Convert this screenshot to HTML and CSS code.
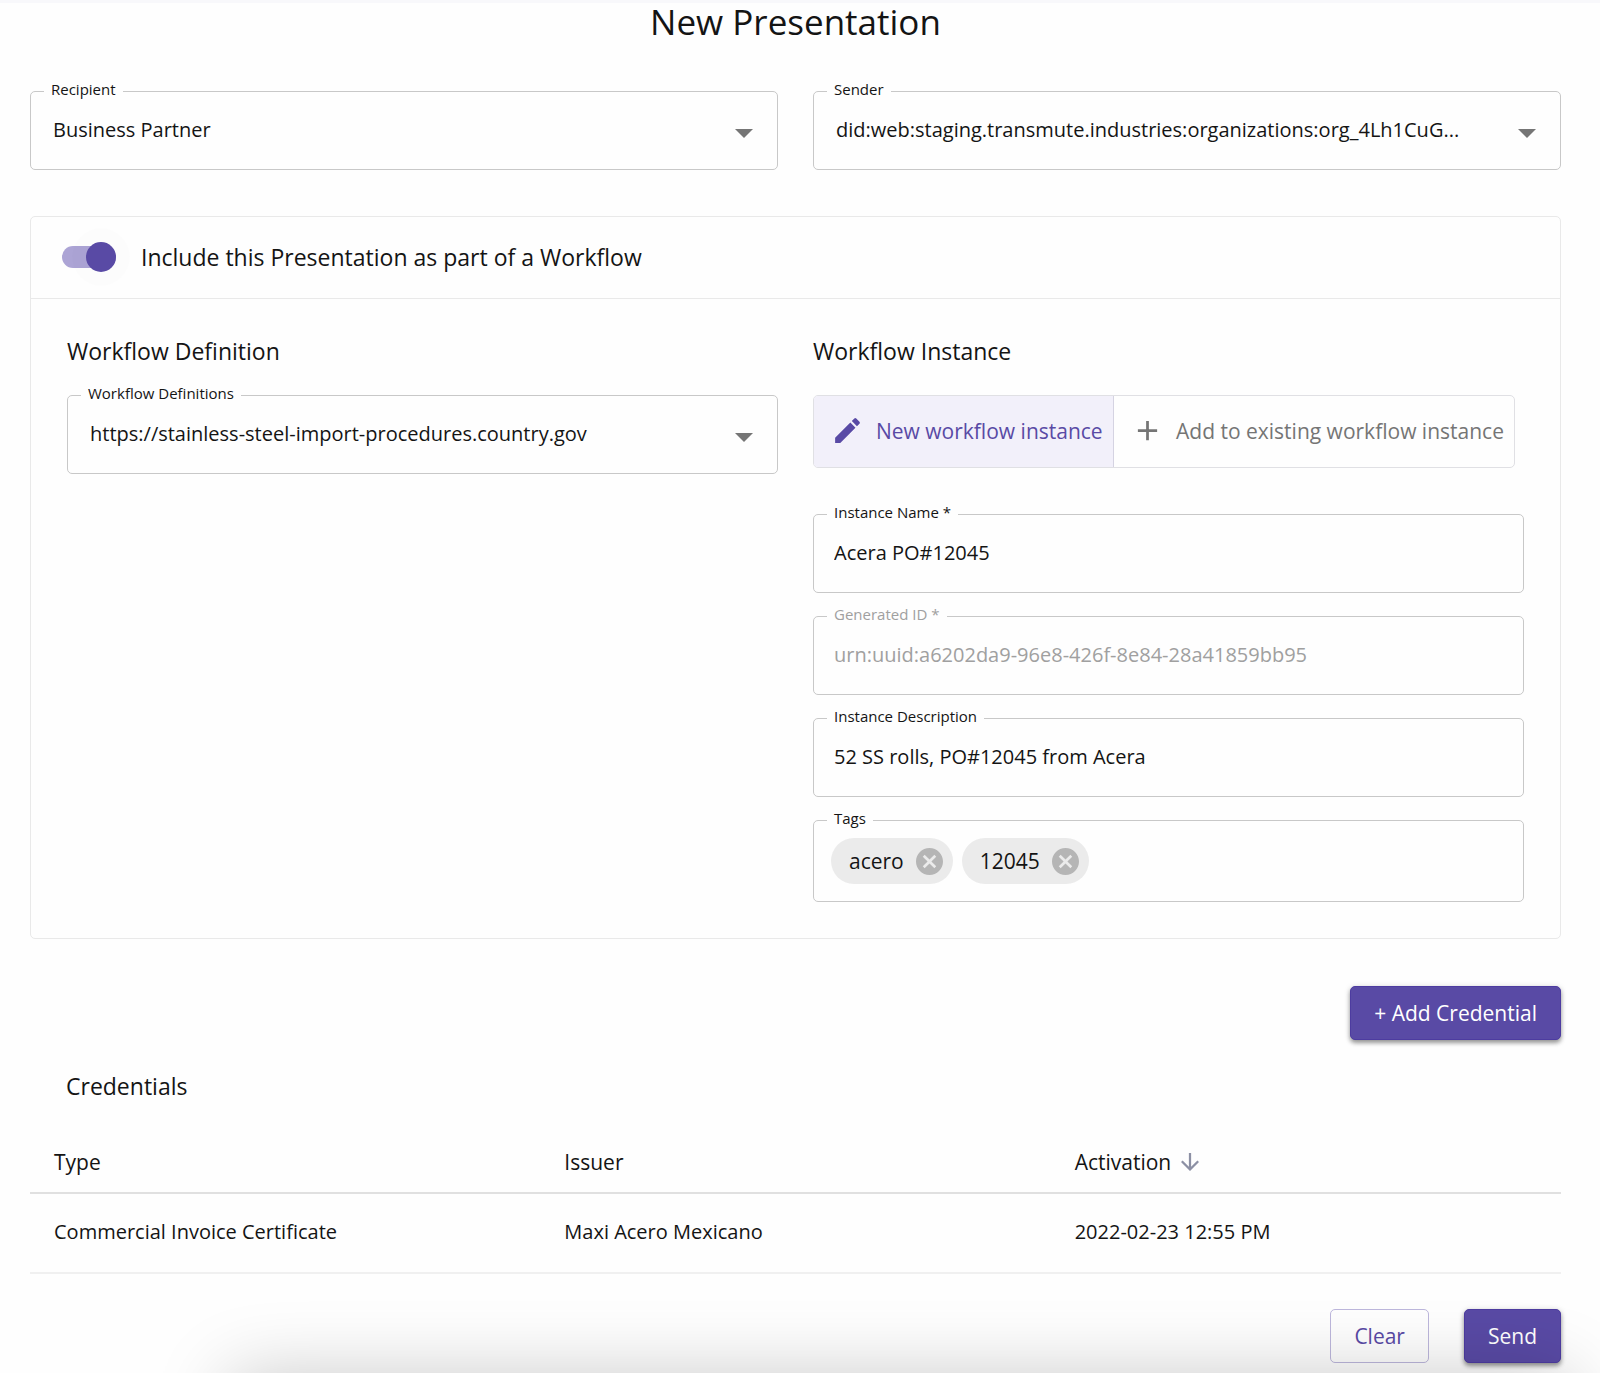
FILE: index.html
```html
<!DOCTYPE html>
<html lang="en">
<head>
<meta charset="utf-8">
<meta name="viewport" content="width=device-width, initial-scale=1">
<title>New Presentation</title>
<link rel="stylesheet" href="styles.css">
</head>
<body>
<main class="page">
  <h1 class="page-title">New Presentation</h1>

  <form class="form">
    <div class="parties">
      <div class="field">
        <label class="field-label" for="recipient">Recipient</label>
        <select class="control select" id="recipient"><option>Business Partner</option></select>
        <svg class="caret" viewBox="0 0 18 9" aria-hidden="true"><path d="M0 0h18L9 9z"/></svg>
      </div>
      <div class="field">
        <label class="field-label" for="sender">Sender</label>
        <select class="control select" id="sender"><option>did:web:staging.transmute.industries:organizations:org_4Lh1CuG...</option></select>
        <svg class="caret" viewBox="0 0 18 9" aria-hidden="true"><path d="M0 0h18L9 9z"/></svg>
      </div>
    </div>

    <section class="card">
      <div class="card-header">
        <input class="switch" type="checkbox" role="switch" id="workflow" checked>
        <label class="heading" for="workflow">Include this Presentation as part of a Workflow</label>
      </div>
      <div class="card-body">
        <div class="column">
          <h2 class="heading">Workflow Definition</h2>
          <div class="field">
            <label class="field-label" for="definition">Workflow Definitions</label>
            <select class="control select" id="definition"><option>https://stainless-steel-import-procedures.country.gov</option></select>
            <svg class="caret" viewBox="0 0 18 9" aria-hidden="true"><path d="M0 0h18L9 9z"/></svg>
          </div>
        </div>
        <div class="column">
          <h2 class="heading">Workflow Instance</h2>
          <div class="toggle-group">
            <button class="toggle toggle-on" type="button" aria-pressed="true">
              <svg class="toggle-icon" viewBox="0 0 24 24" aria-hidden="true"><path d="M3 17.25V21h3.75L17.81 9.94l-3.75-3.75L3 17.25zM20.71 7.04c.39-.39.39-1.02 0-1.41l-2.34-2.34a.996.996 0 0 0-1.41 0l-1.83 1.83 3.75 3.75 1.83-1.83z"/></svg>
              New workflow instance
            </button>
            <button class="toggle" type="button" aria-pressed="false">
              <svg class="toggle-icon" viewBox="0 0 24 24" aria-hidden="true"><path d="M19 13h-6v6h-2v-6H5v-2h6V5h2v6h6v2z"/></svg>
              Add to existing workflow instance
            </button>
          </div>
          <div class="fields">
            <div class="field">
              <label class="field-label" for="name">Instance Name *</label>
              <input class="control" type="text" id="name" value="Acera PO#12045">
            </div>
            <div class="field">
              <label class="field-label field-label-off" for="uuid">Generated ID *</label>
              <input class="control" type="text" id="uuid" value="urn:uuid:a6202da9-96e8-426f-8e84-28a41859bb95" disabled>
            </div>
            <div class="field">
              <label class="field-label" for="description">Instance Description</label>
              <input class="control" type="text" id="description" value="52 SS rolls, PO#12045 from Acera">
            </div>
            <div class="field">
              <label class="field-label" for="tags">Tags</label>
              <div class="control tags">
                <span class="chip">acero
                  <button class="chip-remove" type="button" aria-label="Remove acero"><svg class="chip-icon" viewBox="2 2 20 20" aria-hidden="true"><path d="M12 2C6.47 2 2 6.47 2 12s4.47 10 10 10 10-4.47 10-10S17.53 2 12 2zm5 13.59L15.59 17 12 13.41 8.41 17 7 15.59 10.59 12 7 8.41 8.41 7 12 10.59 15.59 7 17 8.41 13.41 12 17 15.59z"/></svg></button>
                </span>
                <span class="chip">12045
                  <button class="chip-remove" type="button" aria-label="Remove 12045"><svg class="chip-icon" viewBox="2 2 20 20" aria-hidden="true"><path d="M12 2C6.47 2 2 6.47 2 12s4.47 10 10 10 10-4.47 10-10S17.53 2 12 2zm5 13.59L15.59 17 12 13.41 8.41 17 7 15.59 10.59 12 7 8.41 8.41 7 12 10.59 15.59 7 17 8.41 13.41 12 17 15.59z"/></svg></button>
                </span>
                <input class="tag-input" type="text" id="tags">
              </div>
            </div>
          </div>
        </div>
      </div>
    </section>

    <div class="actions">
      <button class="button button-primary" type="button">+ Add Credential</button>
    </div>

    <section class="credentials">
      <h2 class="heading credentials-title">Credentials</h2>
      <table class="table">
        <thead>
          <tr>
            <th scope="col">Type</th>
            <th scope="col">Issuer</th>
            <th scope="col"><span class="sort">Activation
              <svg class="sort-icon" viewBox="4 4 16 16" aria-hidden="true"><path d="M20 12l-1.41-1.41L13 16.17V4h-2v12.17l-5.58-5.59L4 12l8 8 8-8z"/></svg></span></th>
          </tr>
        </thead>
        <tbody>
          <tr>
            <td>Commercial Invoice Certificate</td>
            <td>Maxi Acero Mexicano</td>
            <td>2022-02-23 12:55 PM</td>
          </tr>
        </tbody>
      </table>
    </section>

    <div class="actions form-actions">
      <button class="button button-outline" type="reset">Clear</button>
      <button class="button button-primary" type="button">Send</button>
    </div>
  </form>
</main>
<div class="bottom-shade"></div>
</body>
</html>
```

FILE: styles.css
```css
:root {
  --primary: #594aa5;
  --ink: #141414;
  --line: #c8c8c8;
  --line-soft: #e9e9e9;
}

* { box-sizing: border-box; }

body {
  margin: 0;
  background: #fefefe;
  color: var(--ink);
  font-family: "Open Sans", "Noto Sans", sans-serif;
  font-size: 20px;
  line-height: 28px;
}

button, input, select { font: inherit; color: inherit; }

.page {
  border-top: 3px solid #f8f8fb;
  padding: 0 39px 10px 30px;
}

.page-title {
  margin: 0 0 50px;
  font-size: 35px;
  font-weight: 500;
  line-height: 38px;
  text-align: center;
}

.parties {
  display: grid;
  grid-template-columns: 1fr 1fr;
  gap: 35px;
}

.field { position: relative; }

.field-label {
  position: absolute;
  top: -12px;
  left: 14px;
  padding: 0 7px;
  background: #fefefe;
  font-size: 15px;
  line-height: 20px;
}

.field-label-off { color: #a0a0a0; }

.control {
  display: block;
  width: 100%;
  height: 79px;
  padding: 0 20px 2px;
  border: 1px solid var(--line);
  border-radius: 5px;
  background: transparent;
}

.control:disabled { color: #a0a0a0; opacity: 1; }

.select {
  appearance: none;
  padding-right: 64px;
  padding-left: 22px;
}

.caret {
  position: absolute;
  top: 38px;
  right: 25px;
  width: 18px;
  height: 9px;
  fill: #757575;
  pointer-events: none;
}

.card {
  margin-top: 46px;
  border: 1px solid var(--line-soft);
  border-radius: 5px;
}

.heading {
  margin: 0;
  font-size: 23px;
  font-weight: 500;
  line-height: 32px;
}

.card-header {
  display: flex;
  align-items: center;
  gap: 25px;
  height: 82px;
  padding: 0 31px 2px;
  border-bottom: 1px solid var(--line-soft);
}

.switch {
  appearance: none;
  display: flex;
  align-items: center;
  justify-content: flex-end;
  width: 54px;
  height: 22px;
  margin: 0;
  border-radius: 11px;
  background: #aca4d5;
}

.switch::before {
  content: "";
  width: 30px;
  height: 30px;
  border-radius: 50%;
  background: var(--primary);
  box-shadow: 0 0 0 14px rgba(0, 0, 0, 0.008);
}

.switch:not(:checked) { justify-content: flex-start; }

.card-body {
  display: grid;
  grid-template-columns: 1fr 1fr;
  gap: 35px;
  padding: 36px 36px 36px;
}

.column .heading { margin-bottom: 28px; }

.toggle-group {
  display: grid;
  grid-template-columns: 3fr 4fr;
  max-width: 702px;
  height: 73px;
  border: 1px solid #e0e0e4;
  border-radius: 5px;
  overflow: hidden;
}

.toggle {
  display: flex;
  align-items: center;
  gap: 12px;
  padding: 0 0 2px 17px;
  border: 0;
  background: transparent;
  color: #757575;
  font-size: 21px;
  font-weight: 500;
  white-space: nowrap;
}

.toggle-on {
  border-right: 1px solid #d5d3e2;
  background: #f2f0fa;
  color: var(--primary);
}

.toggle-icon {
  width: 33px;
  height: 33px;
  fill: currentColor;
}

.fields {
  display: grid;
  gap: 23px;
  margin-top: 46px;
}

.tags {
  display: flex;
  align-items: center;
  gap: 9px;
  height: 82px;
  padding: 0 17px;
}

.chip {
  display: flex;
  align-items: center;
  gap: 12px;
  height: 46px;
  padding: 0 10px 0 18px;
  border-radius: 23px;
  background: #ebebeb;
  font-size: 21px;
}

.chip-remove {
  display: flex;
  padding: 0;
  border: 0;
  background: none;
}

.chip-icon {
  width: 27px;
  height: 27px;
  fill: #b5b5b5;
}

.tag-input {
  flex: 1;
  min-width: 0;
  border: 0;
  outline: 0;
  background: transparent;
}

.actions {
  display: flex;
  justify-content: flex-end;
  gap: 35px;
  margin-top: 47px;
}

.button {
  height: 54px;
  padding: 0 23px;
  border: 1px solid transparent;
  border-radius: 5px;
  font-size: 21px;
  font-weight: 500;
}

.button-primary {
  border-color: #4d3ca0;
  background: var(--primary);
  color: #fff;
  box-shadow: 0 3px 4px rgba(0, 0, 0, 0.35), 0 1px 6px rgba(0, 0, 0, 0.15);
}

.button-outline {
  border-color: #bdb7dc;
  background: transparent;
  color: var(--primary);
}

.credentials-title { padding: 30px 36px; }

.table {
  width: 100%;
  table-layout: fixed;
  border-collapse: collapse;
}

.table th,
.table td {
  padding: 0 24px;
  text-align: left;
}

.table th {
  height: 61px;
  border-bottom: 2px solid #e0e0e0;
  font-size: 21px;
  font-weight: 500;
}

.table td {
  height: 80px;
  padding-bottom: 2px;
  border-bottom: 2px solid #f0f0f0;
}

.sort {
  display: flex;
  align-items: center;
  gap: 10px;
}

.sort-icon {
  width: 18px;
  height: 18px;
  fill: #8c90a4;
}

.form-actions { margin-top: 35px; }

.bottom-shade {
  position: fixed;
  top: 100%;
  right: 30px;
  left: 230px;
  height: 120px;
  box-shadow: 0 4px 76px rgba(0, 0, 0, 0.22);
  pointer-events: none;
}
```
